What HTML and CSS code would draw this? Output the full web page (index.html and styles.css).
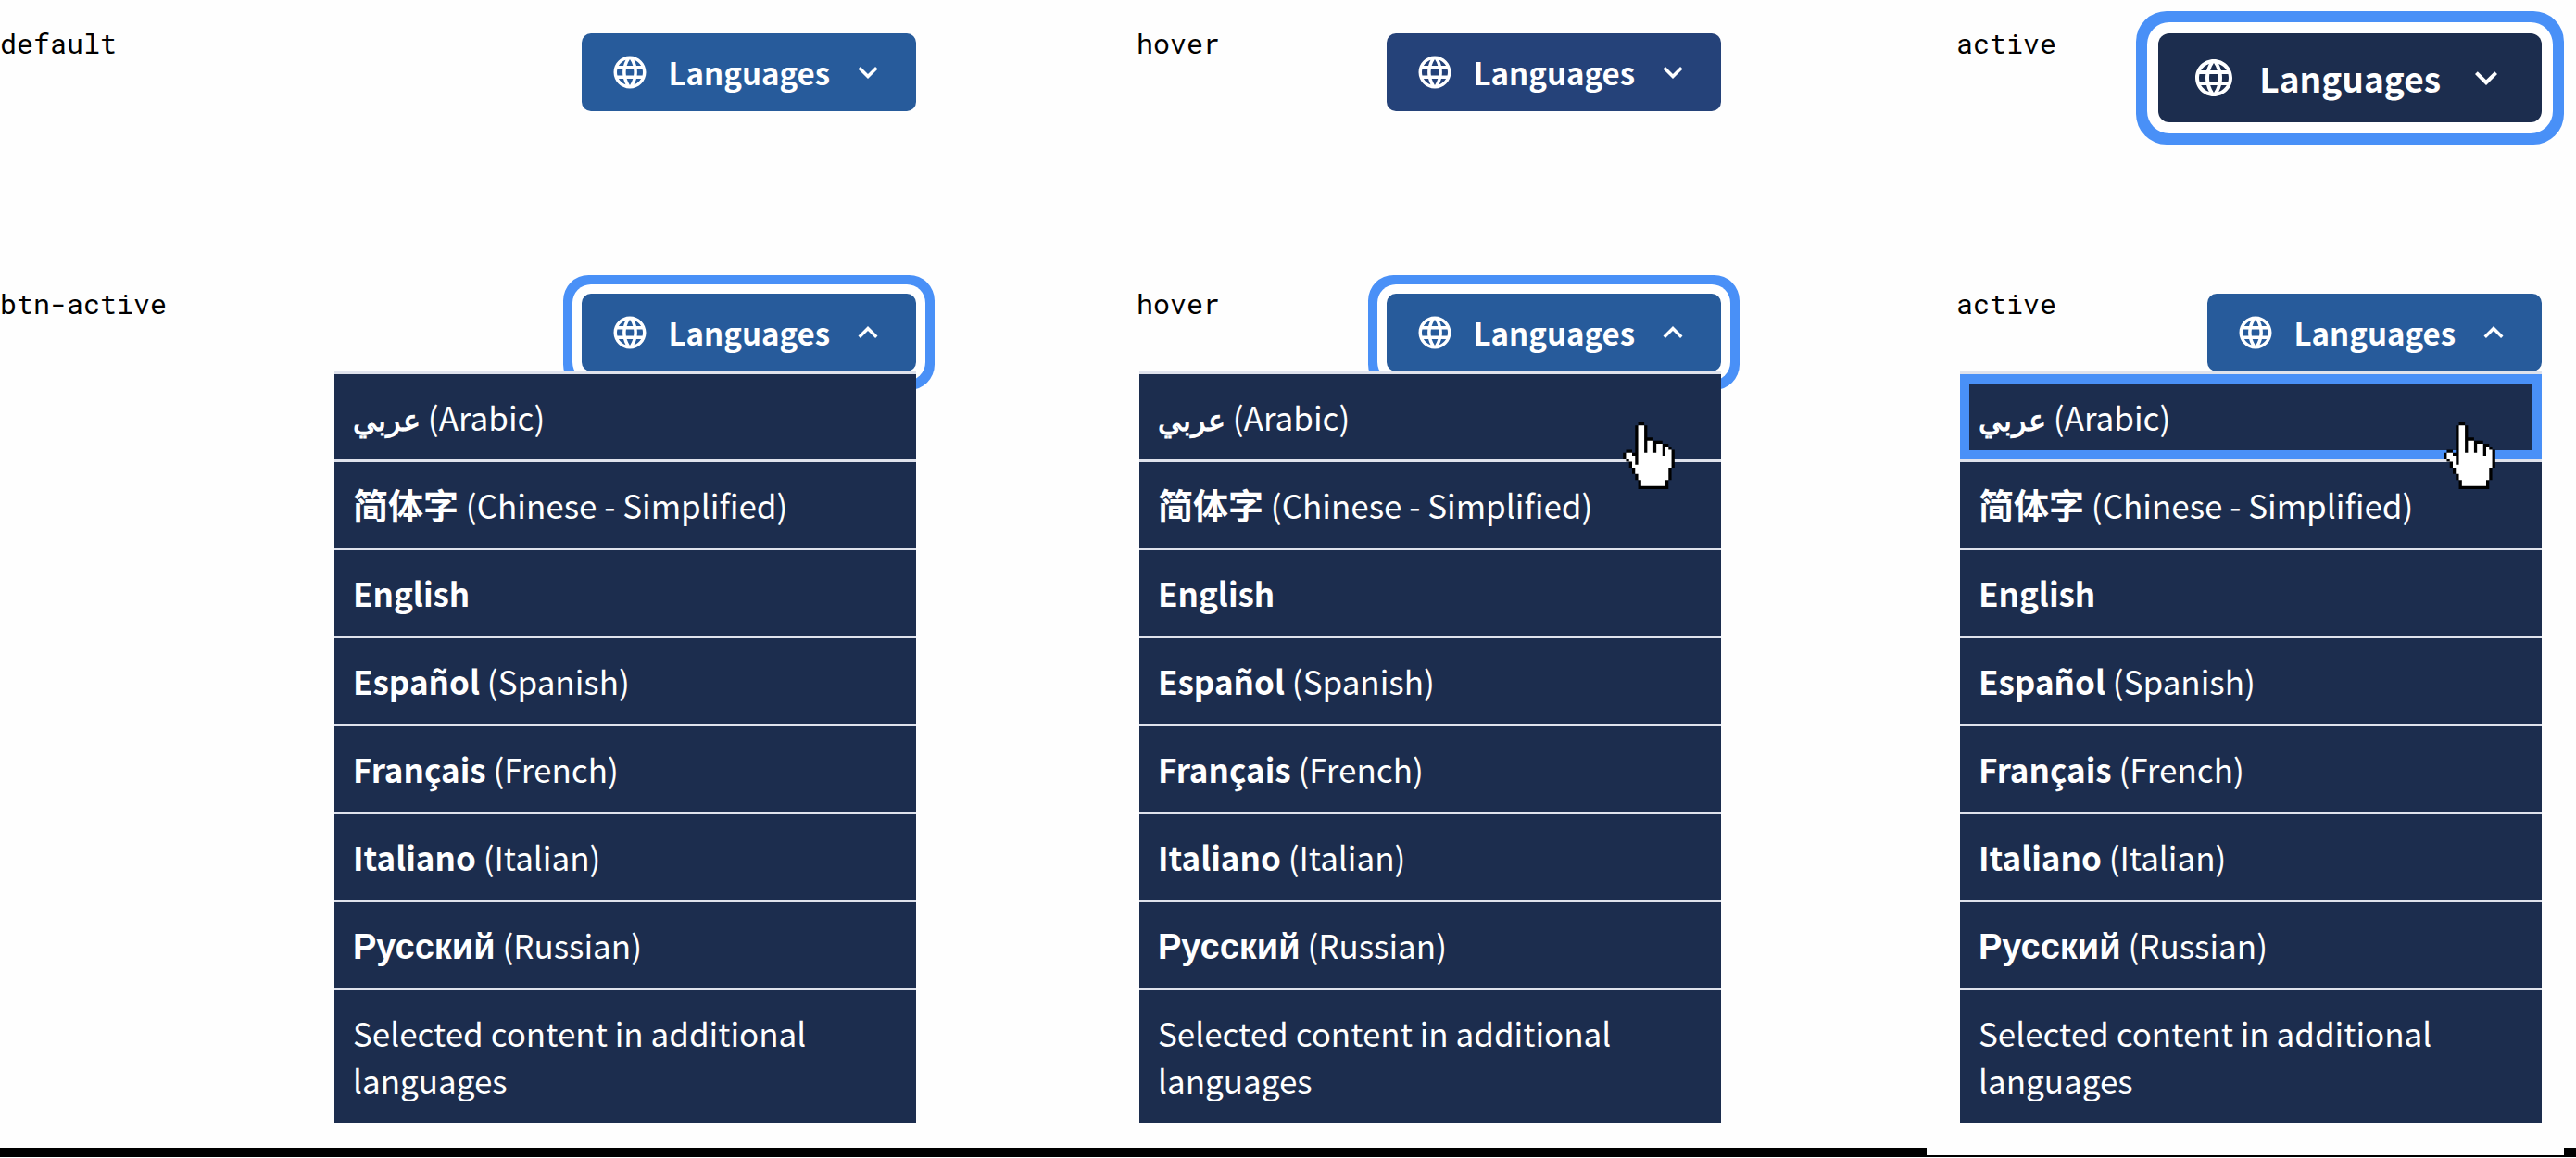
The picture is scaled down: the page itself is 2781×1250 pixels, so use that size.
FILE: index.html
```html
<!DOCTYPE html>
<html lang="en">
<head>
<meta charset="utf-8">
<title>Language selector states</title>
<link rel="stylesheet" href="styles.css">
</head>
<body>
<svg class="symbols" aria-hidden="true">
  <symbol id="globe" viewBox="0 0 24 24"><path fill="currentColor" d="M11.99 2C6.47 2 2 6.48 2 12s4.47 10 9.99 10C17.52 22 22 17.52 22 12S17.52 2 11.99 2zm6.93 6h-2.95a15.65 15.65 0 0 0-1.38-3.56A8.03 8.03 0 0 1 18.92 8zM12 4.04c.83 1.2 1.48 2.53 1.91 3.96h-3.82c.43-1.43 1.08-2.76 1.91-3.96zM4.26 14C4.1 13.36 4 12.69 4 12s.1-1.36.26-2h3.38c-.08.66-.14 1.32-.14 2s.06 1.34.14 2H4.26zm.82 2h2.95c.32 1.25.78 2.45 1.38 3.56A7.987 7.987 0 0 1 5.08 16zm2.95-8H5.08a7.987 7.987 0 0 1 4.33-3.56A15.65 15.65 0 0 0 8.03 8zM12 19.96c-.83-1.2-1.48-2.53-1.91-3.96h3.82c-.43 1.43-1.08 2.76-1.91 3.96zM14.34 14H9.66c-.09-.66-.16-1.32-.16-2s.07-1.35.16-2h4.68c.09.65.16 1.32.16 2s-.07 1.34-.16 2zm.25 5.56c.6-1.11 1.06-2.31 1.38-3.56h2.95a8.03 8.03 0 0 1-4.33 3.56zM16.36 14c.08-.66.14-1.32.14-2s-.06-1.34-.14-2h3.38c.16.64.26 1.31.26 2s-.1 1.36-.26 2h-3.38z"/></symbol>
  <symbol id="down" viewBox="0 0 24 24"><path fill="currentColor" d="M16.59 8.59 12 13.17 7.41 8.59 6 10l6 6 6-6z"/></symbol>
  <symbol id="up" viewBox="0 0 24 24"><path fill="currentColor" d="m12 8-6 6 1.41 1.41L12 10.83l4.59 4.58L18 14z"/></symbol>
  <symbol id="hand" viewBox="0 0 17 22"><path d="M5 0H7V1H8V5H10V6H13V7H15V8H16V9H17V15H16V19H15V22H5V19H4V17H3V15H2V13H1V12H0V10H1V9H3V10H4V1H5Z"/><path fill="#fff" d="M5 1H7V10H8V6H10V10H11V7H13V11H14V8H15V9H16V15H15V19H14V21H6V19H5V17H4V15H3V13H2V12H1V10H3V11H4V14H5Z"/></symbol>
</svg>

<main class="states">
  <section class="state">
    <h2 class="label">default</h2>
    <button class="btn" type="button" aria-expanded="false"><svg class="icon"><use href="#globe"/></svg><span>Languages</span><svg class="icon"><use href="#down"/></svg></button>
  </section>
  <section class="state">
    <h2 class="label">hover</h2>
    <button class="btn btn-hover" type="button" aria-expanded="false"><svg class="icon"><use href="#globe"/></svg><span>Languages</span><svg class="icon"><use href="#down"/></svg></button>
  </section>
  <section class="state">
    <h2 class="label">active</h2>
    <button class="btn btn-large" type="button" aria-expanded="false"><svg class="icon"><use href="#globe"/></svg><span>Languages</span><svg class="icon"><use href="#down"/></svg></button>
  </section>

  <section class="state">
    <h2 class="label">btn-active</h2>
    <button class="btn btn-focus" type="button" aria-expanded="true"><svg class="icon"><use href="#globe"/></svg><span>Languages</span><svg class="icon"><use href="#up"/></svg></button>
    <ul class="menu">
      <li><a href="#ar"><b class="arabic" lang="ar">عربي</b> (Arabic)</a></li>
      <li><a href="#zh"><b class="chinese" lang="zh-Hans">简体字</b> (Chinese - Simplified)</a></li>
      <li><a href="#en"><b>English</b></a></li>
      <li><a href="#es"><b lang="es">Español</b> (Spanish)</a></li>
      <li><a href="#fr"><b lang="fr">Français</b> (French)</a></li>
      <li><a href="#it"><b lang="it">Italiano</b> (Italian)</a></li>
      <li><a href="#ru"><b class="russian" lang="ru">Русский</b> (Russian)</a></li>
      <li><a href="#more">Selected content in additional languages</a></li>
    </ul>
  </section>
  <section class="state">
    <h2 class="label">hover</h2>
    <button class="btn btn-focus" type="button" aria-expanded="true"><svg class="icon"><use href="#globe"/></svg><span>Languages</span><svg class="icon"><use href="#up"/></svg></button>
    <ul class="menu">
      <li><a href="#ar"><b class="arabic" lang="ar">عربي</b> (Arabic)</a><svg class="pointer"><use href="#hand"/></svg></li>
      <li><a href="#zh"><b class="chinese" lang="zh-Hans">简体字</b> (Chinese - Simplified)</a></li>
      <li><a href="#en"><b>English</b></a></li>
      <li><a href="#es"><b lang="es">Español</b> (Spanish)</a></li>
      <li><a href="#fr"><b lang="fr">Français</b> (French)</a></li>
      <li><a href="#it"><b lang="it">Italiano</b> (Italian)</a></li>
      <li><a href="#ru"><b class="russian" lang="ru">Русский</b> (Russian)</a></li>
      <li><a href="#more">Selected content in additional languages</a></li>
    </ul>
  </section>
  <section class="state">
    <h2 class="label">active</h2>
    <button class="btn" type="button" aria-expanded="true"><svg class="icon"><use href="#globe"/></svg><span>Languages</span><svg class="icon"><use href="#up"/></svg></button>
    <ul class="menu">
      <li><a class="pressed" href="#ar"><b class="arabic" lang="ar">عربي</b> (Arabic)</a><svg class="pointer"><use href="#hand"/></svg></li>
      <li><a href="#zh"><b class="chinese" lang="zh-Hans">简体字</b> (Chinese - Simplified)</a></li>
      <li><a href="#en"><b>English</b></a></li>
      <li><a href="#es"><b lang="es">Español</b> (Spanish)</a></li>
      <li><a href="#fr"><b lang="fr">Français</b> (French)</a></li>
      <li><a href="#it"><b lang="it">Italiano</b> (Italian)</a></li>
      <li><a href="#ru"><b class="russian" lang="ru">Русский</b> (Russian)</a></li>
      <li><a href="#more">Selected content in additional languages</a></li>
    </ul>
  </section>
</main>
<footer class="strip"><span class="notch"></span></footer>
</body>
</html>
```
FILE: styles.css
```css
* { box-sizing: border-box; }

body {
  margin: 0;
  background: #fefefe;
  font-family: "Noto Sans CJK SC", "Noto Sans", sans-serif;
}

.symbols { display: none; }

.states {
  display: grid;
  grid-template-columns: 989fr 869fr 886fr;
  grid-template-rows: 281px auto;
  padding: 36px 37px 27px 0;
}

/* One example: caption on the left, button and menu on the right */
.state {
  display: flex;
  flex-wrap: wrap;
  justify-content: space-between;
  align-items: flex-start;
  align-content: flex-start;
}
.state:nth-child(3n + 2) { padding-left: 238px; }
.state:nth-child(3n) { padding-left: 254px; }

.label {
  margin: 0;
  font: 400 30px/22px "Roboto Mono", "Liberation Mono", monospace;
  color: #000;
}

.btn {
  display: flex;
  align-items: center;
  gap: 20px;
  height: 84px;
  padding: 0 31px;
  border: 0;
  border-radius: 10px;
  background: #275b9b;
  color: #fff;
  font: 700 33px/42px "Noto Sans CJK SC", sans-serif;
}
.btn-hover { background: #254279; }
.btn-focus { box-shadow: 0 0 0 10px #fff, 0 0 0 20px #4990f7; }
.btn-large {
  gap: 25px;
  height: 96px;
  padding: 0 36px;
  border-radius: 12px;
  background: #1c2d4e;
  box-shadow: 0 0 0 12px #fff, 0 0 0 24px #4990f7;
  font-size: 37px;
}

.icon { width: 42px; height: 42px; }
.btn-large .icon { width: 48px; height: 48px; }

.menu {
  position: relative;
  width: 628px;
  max-width: 100%;
  margin: 0 0 0 auto;
  padding: 0;
  list-style: none;
}
.menu li {
  position: relative;
  border-top: 3px solid #dfe2ec;
}
.menu a {
  display: block;
  padding: 20px 20px 21px;
  background: #1c2d4e;
  color: #fff;
  font-size: 35px;
  line-height: 51px;
  text-decoration: none;
}
.menu .pressed { box-shadow: inset 0 0 0 10px #4990f7; }

.menu b { line-height: 1; }
.arabic { font-family: "Noto Sans", serif; font-size: 32px; }
.chinese { font-size: 38px; }
.russian { font-family: "Liberation Sans", sans-serif; font-size: 38px; }

.pointer {
  position: absolute;
  z-index: 1;
  top: 52px;
  right: 50px;
  width: 56px;
  height: 72px;
}

.strip {
  display: grid;
  grid-template-columns: 2080fr 688fr 13fr;
  height: 10px;
  background: #000;
}
.notch {
  grid-column: 2;
  height: 8px;
  background: #fefefe;
}
```
